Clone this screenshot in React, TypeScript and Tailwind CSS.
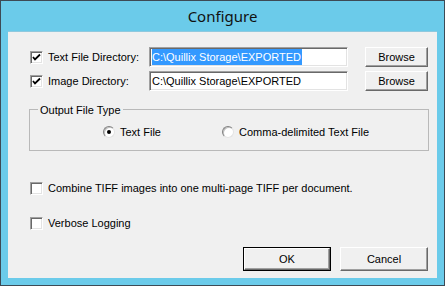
import React from "react";

const sunken =
	"border border-t-[#a0a0a0] border-l-[#a0a0a0] border-r-white border-b-white shadow-[inset_1px_1px_0_#696969,inset_-1px_-1px_0_#e3e3e3]";

const raised =
	"border border-t-white border-l-white border-r-[#696969] border-b-[#696969] shadow-[inset_-1px_-1px_0_#a0a0a0] bg-[#f0f0f0]";

const CheckBox = ({ checked }: { checked?: boolean }) => (
	<div className={`w-[13px] h-[13px] bg-white shrink-0 flex items-center justify-center ${sunken}`}>
		{checked && (
			<svg width="9" height="9" viewBox="0 0 9 9">
				<path d="M1 4 L3 6.5 L8 1.5" fill="none" stroke="#000" strokeWidth="1.8" />
			</svg>
		)}
	</div>
);

const Radio = ({ checked }: { checked?: boolean }) => (
	<div className="w-[12px] h-[12px] rounded-full bg-white shrink-0 flex items-center justify-center border border-t-[#808080] border-l-[#808080] border-r-[#e3e3e3] border-b-[#e3e3e3] shadow-[inset_1px_1px_0_#c0c0c0]">
		{checked && <div className="w-[4px] h-[4px] rounded-full bg-black" />}
	</div>
);

const Button = ({ label, w, h, isDefault }: { label: string; w: string; h: string; isDefault?: boolean }) => (
	<div className={`${w} ${h} ${isDefault ? "border border-black" : ""} shrink-0 flex`}>
		<div className={`flex-1 flex items-center justify-center ${raised}`}>{label}</div>
	</div>
);

const DirRow = ({ label, selected }: { label: string; selected?: boolean }) => (
	<div className="flex items-center h-[20px] pl-[22px]">
		<div className="w-[119px] flex items-center gap-[5px]">
			<CheckBox checked />
			<span>{label}</span>
		</div>
		<div className={`w-[199px] h-[20px] bg-white flex items-center px-[2px] ${sunken}`}>
			{selected ? (
				<span className="bg-[#3399ff] text-white pr-[1px]">C:\Quillix Storage\EXPORTED</span>
			) : (
				<span>C:\Quillix Storage\EXPORTED</span>
			)}
		</div>
		<div className="ml-[17px]">
			<Button label="Browse" w="w-[63px]" h="h-[20px]" />
		</div>
	</div>
);

export default function App() {
	return (
		<div className="w-[445px] h-[286px] border border-[#3d4a55] bg-[#6bcbea] flex flex-col">
			<div className="h-[30px] flex items-center justify-center text-[15px] text-[#111] font-['Segoe_UI','Noto_Sans',sans-serif]">
				Configure
			</div>
			<div className="flex-1 mx-[7px] mb-[7px] bg-[#f0f0f0] border-t border-[#8fc9de] flex flex-col text-[11px] text-black font-['Liberation_Sans',Arial,sans-serif]">
				<div className="mt-[15px] flex flex-col gap-[4px]">
					<DirRow label="Text File Directory:" selected />
					<DirRow label="Image Directory:" />
				</div>

				{/* Output File Type group */}
				<div className="relative ml-[21px] mt-[18px] w-[400px] h-[42px] border border-[#b9b9b9] flex items-center pl-[73px] pt-[4px]">
					<span className="absolute -top-[8px] left-[8px] px-[2px] bg-[#f0f0f0]">Output File Type</span>
					<div className="w-[119px] flex items-center gap-[5px]">
						<Radio checked />
						<span>Text File</span>
					</div>
					<div className="flex items-center gap-[5px]">
						<Radio />
						<span>Comma-delimited Text File</span>
					</div>
				</div>

				<div className="mt-[27px] h-[20px] pl-[22px] flex items-center gap-[5px]">
					<CheckBox />
					<span>Combine TIFF images into one multi-page TIFF per document.</span>
				</div>
				<div className="mt-[15px] h-[20px] pl-[22px] flex items-center gap-[5px]">
					<CheckBox />
					<span>Verbose Logging</span>
				</div>

				<div className="mt-[14px] flex justify-end gap-[9px] pr-[9px]">
					<Button label="OK" w="w-[88px]" h="h-[24px]" isDefault />
					<Button label="Cancel" w="w-[88px]" h="h-[24px]" />
				</div>
			</div>
		</div>
	);
}
